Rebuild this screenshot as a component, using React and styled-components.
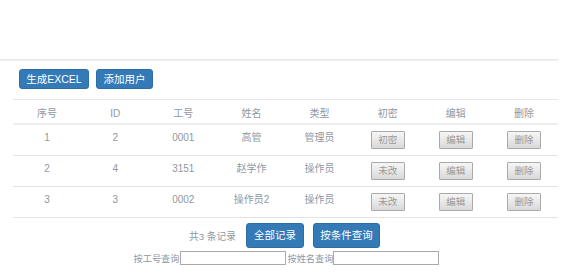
import React from "react";
import styled, { createGlobalStyle } from "styled-components";

const Global = createGlobalStyle`
  html, body { margin: 0; padding: 0; background: #fff; }
  body { font-family: "Liberation Sans", "Noto Sans CJK SC", sans-serif; font-size: 10px; color: #8f98a3; }
`;

const Page = styled.div`
  width: 558px;
  padding-top: 59px;
`;

const Rule = styled.div`
  height: 1px;
  background: #e6e6e6;
  border-bottom: 1px solid #f2f2f2;
`;

const Toolbar = styled.div`
  display: flex;
  gap: 7px;
  padding: 8px 0 0 19px;
`;

const PrimaryButton = styled.button`
  width: ${(p) => p.$w}px;
  height: ${(p) => p.$h || 20}px;
  padding: 0;
  background: #337ab7;
  color: #fff;
  border: 1px solid #2e6da4;
  border-radius: 3px;
  font-family: inherit;
  font-size: ${(p) => p.$fs || 10.5}px;
  line-height: 1;
  cursor: pointer;
`;

const Table = styled.table`
  margin: 10px 0 0 13px;
  width: 545px;
  border-collapse: collapse;
  table-layout: fixed;
`;

const Th = styled.th`
  font-weight: normal;
  font-size: 10px;
  line-height: 17px;
  padding: 5px 0 1px;
  border-top: 1px solid #e8e8e8;
  border-bottom: 2px solid #eeeeee;
  text-align: center;
  color: #8f98a3;
`;

const Td = styled.td`
  text-align: center;
  vertical-align: top;
  font-size: 10px;
  line-height: 17px;
  padding: 4px 0 6px;
  height: 20px;
  border-bottom: 1px solid #e3e3e3;
  color: #8f98a3;
`;

const CellButton = styled.button`
  display: inline-block;
  margin-top: 2px;
  width: 34px;
  height: 18px;
  padding: 0;
  border: 1px solid #aaaaaa;
  border-radius: 1px;
  background: linear-gradient(#f6f6f6, #d9d9d9);
  color: #999;
  font-family: inherit;
  font-size: 9.5px;
  line-height: 16px;
  vertical-align: top;
`;

const Footer = styled.div`
  margin-left: 13px;
  width: 545px;
  display: flex;
  flex-direction: column;
  align-items: center;
`;

const SummaryRow = styled.div`
  display: flex;
  align-items: center;
  gap: 9px;
  margin-top: 5px;
  margin-left: -2px;
`;

const Count = styled.span`
  color: #8f98a3;
  font-size: 9.7px;
  margin-right: 1px;
`;

const SearchRow = styled.div`
  display: flex;
  align-items: center;
  margin-top: 3px;
  margin-left: 2px;
`;

const Label = styled.label`
  color: #8f98a3;
  font-size: 9.2px;
  margin-left: ${(p) => p.$ml || 0}px;
`;

const Input = styled.input`
  width: 106px;
  height: 14px;
  box-sizing: border-box;
  border: 1px solid #a9a9a9;
  padding: 0;
  margin: 0;
`;

const rows = [
  { n: 1, id: 2, no: "0001", name: "高管", type: "管理员", pw: "初密" },
  { n: 2, id: 4, no: "3151", name: "赵学作", type: "操作员", pw: "未改" },
  { n: 3, id: 3, no: "0002", name: "操作员2", type: "操作员", pw: "未改" },
];

const headers = ["序号", "ID", "工号", "姓名", "类型", "初密", "编辑", "删除"];

export default function App() {
  return (
    <>
      <Global />
      <Page>
        <Rule />
        <Toolbar>
          <PrimaryButton $w={70}>生成EXCEL</PrimaryButton>
          <PrimaryButton $w={57}>添加用户</PrimaryButton>
        </Toolbar>
        <Table>
          <thead>
            <tr>
              {headers.map((h) => (
                <Th key={h}>{h}</Th>
              ))}
            </tr>
          </thead>
          <tbody>
            {rows.map((r) => (
              <tr key={r.n}>
                <Td>{r.n}</Td>
                <Td>{r.id}</Td>
                <Td>{r.no}</Td>
                <Td>{r.name}</Td>
                <Td>{r.type}</Td>
                <Td><CellButton>{r.pw}</CellButton></Td>
                <Td><CellButton>编辑</CellButton></Td>
                <Td><CellButton>删除</CellButton></Td>
              </tr>
            ))}
          </tbody>
        </Table>
        <Footer>
          <SummaryRow>
            <Count>共3 条记录</Count>
            <PrimaryButton $w={58} $h={25}>全部记录</PrimaryButton>
            <PrimaryButton $w={67} $h={25}>按条件查询</PrimaryButton>
          </SummaryRow>
          <SearchRow>
            <Label>按工号查询</Label>
            <Input />
            <Label $ml={2}>按姓名查询</Label>
            <Input />
          </SearchRow>
        </Footer>
      </Page>
    </>
  );
}
